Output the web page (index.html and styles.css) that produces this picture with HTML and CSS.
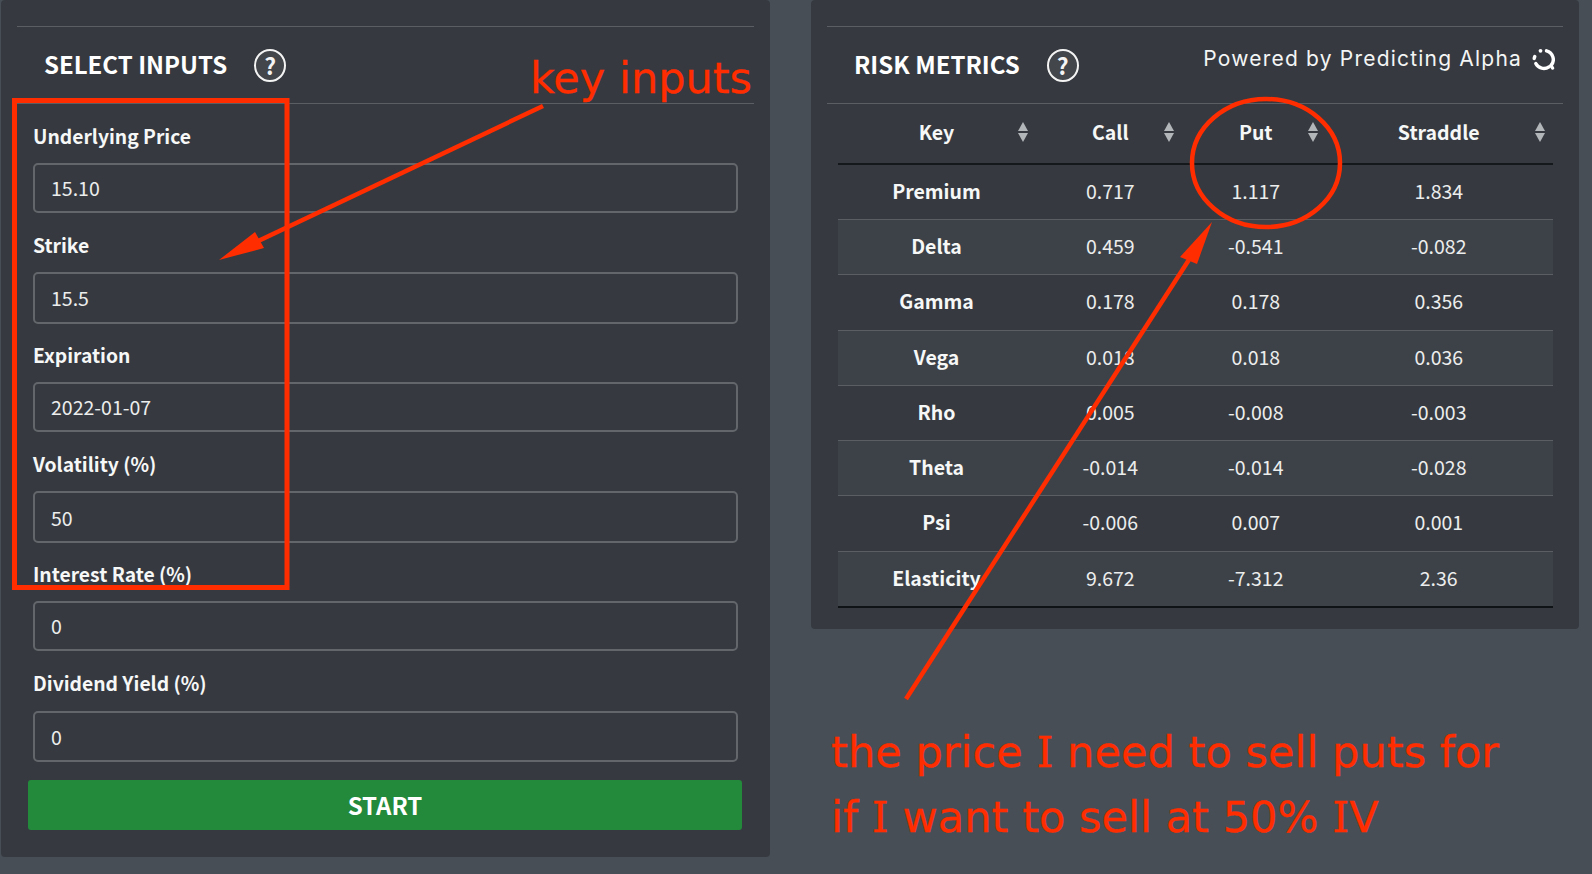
FILE: index.html
```
<!DOCTYPE html>
<html lang="en">
<head>
<meta charset="utf-8">
<title>Options calculator</title>
<link rel="stylesheet" href="styles.css">
</head>
<body>
<main class="page">
  <section class="panel panel-left">
    <header class="panel-head">
      <h2 class="panel-title">SELECT INPUTS</h2>
      <span class="help">?</span>
    </header>
    <form class="form">
      <div class="field"><label class="field-label">Underlying Price</label><input class="field-input" value="15.10"></div>
      <div class="field"><label class="field-label">Strike</label><input class="field-input" value="15.5"></div>
      <div class="field"><label class="field-label">Expiration</label><input class="field-input" value="2022-01-07"></div>
      <div class="field"><label class="field-label">Volatility (%)</label><input class="field-input" value="50"></div>
      <div class="field"><label class="field-label">Interest Rate (%)</label><input class="field-input" value="0"></div>
      <div class="field"><label class="field-label">Dividend Yield (%)</label><input class="field-input" value="0"></div>
      <button type="button" class="start">START</button>
    </form>
  </section>
  <section class="panel panel-right">
    <header class="panel-head">
      <h2 class="panel-title">RISK METRICS</h2>
      <span class="help">?</span>
      <div class="powered">
        <span class="powered-text">Powered by Predicting Alpha</span>
        <svg class="powered-logo" viewBox="0 0 24 24" width="24" height="24">
          <path d="M15.5 3.8A9 9 0 0 1 20 18.5L21.5 21" fill="none" stroke="#fff" stroke-width="3.4" stroke-linecap="round"/>
          <path d="M18 19.8A9 9 0 0 1 4.8 16.5" fill="none" stroke="#fff" stroke-width="3.4" stroke-linecap="round"/>
          <path d="M3.2 11.5A9 9 0 0 1 3.8 9.5" fill="none" stroke="#fff" stroke-width="3.4" stroke-linecap="round"/>
          <circle cx="9.5" cy="3.8" r="1.9" fill="#fff"/>
        </svg>
      </div>
    </header>
    <table class="metrics">
      <colgroup><col class="col-key"><col class="col-call"><col class="col-put"><col class="col-straddle"></colgroup>
      <thead>
        <tr>
          <th><span class="th-inner">Key<i class="sort"></i></span></th>
          <th><span class="th-inner">Call<i class="sort"></i></span></th>
          <th><span class="th-inner">Put<i class="sort"></i></span></th>
          <th><span class="th-inner">Straddle<i class="sort"></i></span></th>
        </tr>
      </thead>
      <tbody>
        <tr><th>Premium</th><td>0.717</td><td>1.117</td><td>1.834</td></tr>
        <tr><th>Delta</th><td>0.459</td><td>-0.541</td><td>-0.082</td></tr>
        <tr><th>Gamma</th><td>0.178</td><td>0.178</td><td>0.356</td></tr>
        <tr><th>Vega</th><td>0.018</td><td>0.018</td><td>0.036</td></tr>
        <tr><th>Rho</th><td>0.005</td><td>-0.008</td><td>-0.003</td></tr>
        <tr><th>Theta</th><td>-0.014</td><td>-0.014</td><td>-0.028</td></tr>
        <tr><th>Psi</th><td>-0.006</td><td>0.007</td><td>0.001</td></tr>
        <tr><th>Elasticity</th><td>9.672</td><td>-7.312</td><td>2.36</td></tr>
      </tbody>
    </table>
  </section>
</main>
<svg class="marks" viewBox="0 0 1592 874" width="1592" height="874">
  <rect class="mark-line mark-rect" x="14.500" y="100.500" width="272.500" height="487"/>
  <line class="mark-line mark-thin" x1="543" y1="106" x2="250" y2="245"/>
  <polygon class="mark-fill" points="219,260 255,232 264,248"/>
  <ellipse class="mark-line mark-ring" cx="1266" cy="163" rx="74" ry="64"/>
  <line class="mark-line mark-thin" x1="906" y1="699" x2="1192" y2="255"/>
  <polygon class="mark-fill" points="1212,222 1180,257 1197,264"/>
</svg>
<p class="note note-key">key inputs</p>
<p class="note note-price">the price <span class="slab">I</span> need to sell puts for<br>if <span class="slab">I</span> want to sell at 50% <span class="slab">I</span>V</p>
</body>
</html>
```
FILE: styles.css
```
* { box-sizing: border-box; }
html, body { margin: 0; padding: 0; }
body {
  width: 1592px;
  height: 874px;
  overflow: hidden;
  position: relative;
  background: #474e56;
  color: #f4f5f5;
  font-family: "Noto Sans CJK SC", "Noto Sans", sans-serif;
}
.page {
  display: flex;
  align-items: flex-start;
  gap: 41px;
  padding-left: 1px;
}
.panel {
  background: #363a40;
  border-radius: 4px;
}
.panel-left { width: 769px; padding: 26px 16px 27px; }
.panel-right { width: 768px; padding: 26px 16px 21px 16px; }
.panel-head {
  display: flex;
  align-items: center;
  gap: 27px;
  height: 78px;
  padding: 0 8px 0 27px;
  border-top: 1.5px solid #5b5f64;
  border-bottom: 1.5px solid #5b5f64;
}
.panel-title {
  margin: 0;
  font-size: 24px;
  line-height: 32px;
  font-weight: 700;
  color: #fff;
  position: relative;
  top: -1px;
}
.help {
  width: 32px;
  height: 33px;
  border: 2px solid #f4f4f4;
  border-radius: 50%;
  background: #43464b;
  color: #f4f4f4;
  font-size: 23px;
  font-weight: 700;
  line-height: 28px;
  text-align: center;
  flex: none;
}
.powered {
  margin-left: auto;
  display: flex;
  align-items: center;
  gap: 9px;
  position: relative;
  top: -6px;
}
.powered-text {
  font-family: Inter, "Open Sans", sans-serif;
  font-size: 21px;
  letter-spacing: 1.200px;
  line-height: 26px;
  color: #f4f5f5;
}
.powered-logo { display: block; }
.form { padding: 0 16px; margin-top: -1px; }
.field { height: 109.6px; padding-top: 19px; }
.field:nth-child(odd) { padding-top: 20px; }
.field-label {
  display: block;
  font-size: 19.300px;
  line-height: 26px;
  font-weight: 700;
  color: #f6f7f7;
  margin-bottom: 14.600px;
}
.field:nth-child(odd) .field-label { margin-bottom: 13.600px; }
.field-input {
  display: block;
  width: 100%;
  height: 50px;
  background: #363a40;
  border: 2px solid #63676c;
  border-radius: 5px;
  padding: 0 16px;
  color: #eceded;
  font: 400 19.500px/24px "Noto Sans CJK SC", "Noto Sans", sans-serif;
}
.field:nth-child(even) .field-input { height: 51.500px; }
.start {
  display: block;
  width: 714px;
  height: 50px;
  margin: 19px -5px 0;
  border: 0;
  border-radius: 3px;
  background: #238a3c;
  color: #fff;
  font: 700 24px/32px "Noto Sans CJK SC", "Noto Sans", sans-serif;
}
.metrics {
  width: 715px;
  margin-left: 11px;
  border-collapse: separate;
  border-spacing: 0;
  table-layout: fixed;
  font-size: 19.500px;
  line-height: 26px;
  border-bottom: 2px solid #101316;
}
.col-key { width: 197px; }
.col-call { width: 152px; }
.col-put { width: 139px; }
.col-straddle { width: 227px; }
.metrics thead th {
  height: 61px;
  border-bottom: 2px solid #15181b;
  padding: 0 0 4px;
  font-weight: 700;
  color: #f6f7f7;
}
.metrics thead th + th { padding-right: 1.500px; }
.th-inner { display: block; position: relative; text-align: center; }
.sort {
  position: absolute;
  right: 6px;
  top: 3px;
  width: 11px;
  height: 20px;
}
.metrics thead th:nth-child(2) .sort { right: 11px; }
.sort::before, .sort::after {
  content: "";
  position: absolute;
  left: 0;
  width: 0;
  height: 0;
  border-left: 5.500px solid transparent;
  border-right: 5.500px solid transparent;
}
.sort::before { top: 0; border-bottom: 9px solid #b3b6b9; }
.sort::after { bottom: 0; border-top: 9px solid #b3b6b9; }
.metrics tbody th, .metrics tbody td {
  height: 55.25px;
  padding: 0 0 2px;
  text-align: center;
  border-top: 1.5px solid #5b5f64;
  color: #eceded;
  font-weight: 400;
}
.metrics tbody td { padding-right: 1.500px; }
.metrics tbody tr:first-child th, .metrics tbody tr:first-child td { border-top: 0; height: 54px; }
.metrics tbody th { font-weight: 700; color: #f6f7f7; }
.metrics tbody tr:nth-child(even) th, .metrics tbody tr:nth-child(even) td { background: #3d4248; }
.marks { position: absolute; left: 0; top: 0; pointer-events: none; }
.mark-line { fill: none; stroke: #ff2d00; }
.mark-rect { stroke-width: 5; }
.mark-thin { stroke-width: 4.500; }
.mark-ring { stroke-width: 4.500; }
.mark-fill { fill: #ff2d00; }
.note {
  position: absolute;
  margin: 0;
  font-family: "DejaVu Sans", sans-serif;
  color: #ff2d00;
  white-space: nowrap;
  -webkit-text-stroke: 0.3px #ff2d00;
}
.slab { font-family: "DejaVu Serif", serif; }
.note-key { left: 530px; top: 52px; font-size: 43px; line-height: 52px; }
.note-price { left: 831px; top: 720px; font-size: 43.100px; line-height: 65px; }
```
